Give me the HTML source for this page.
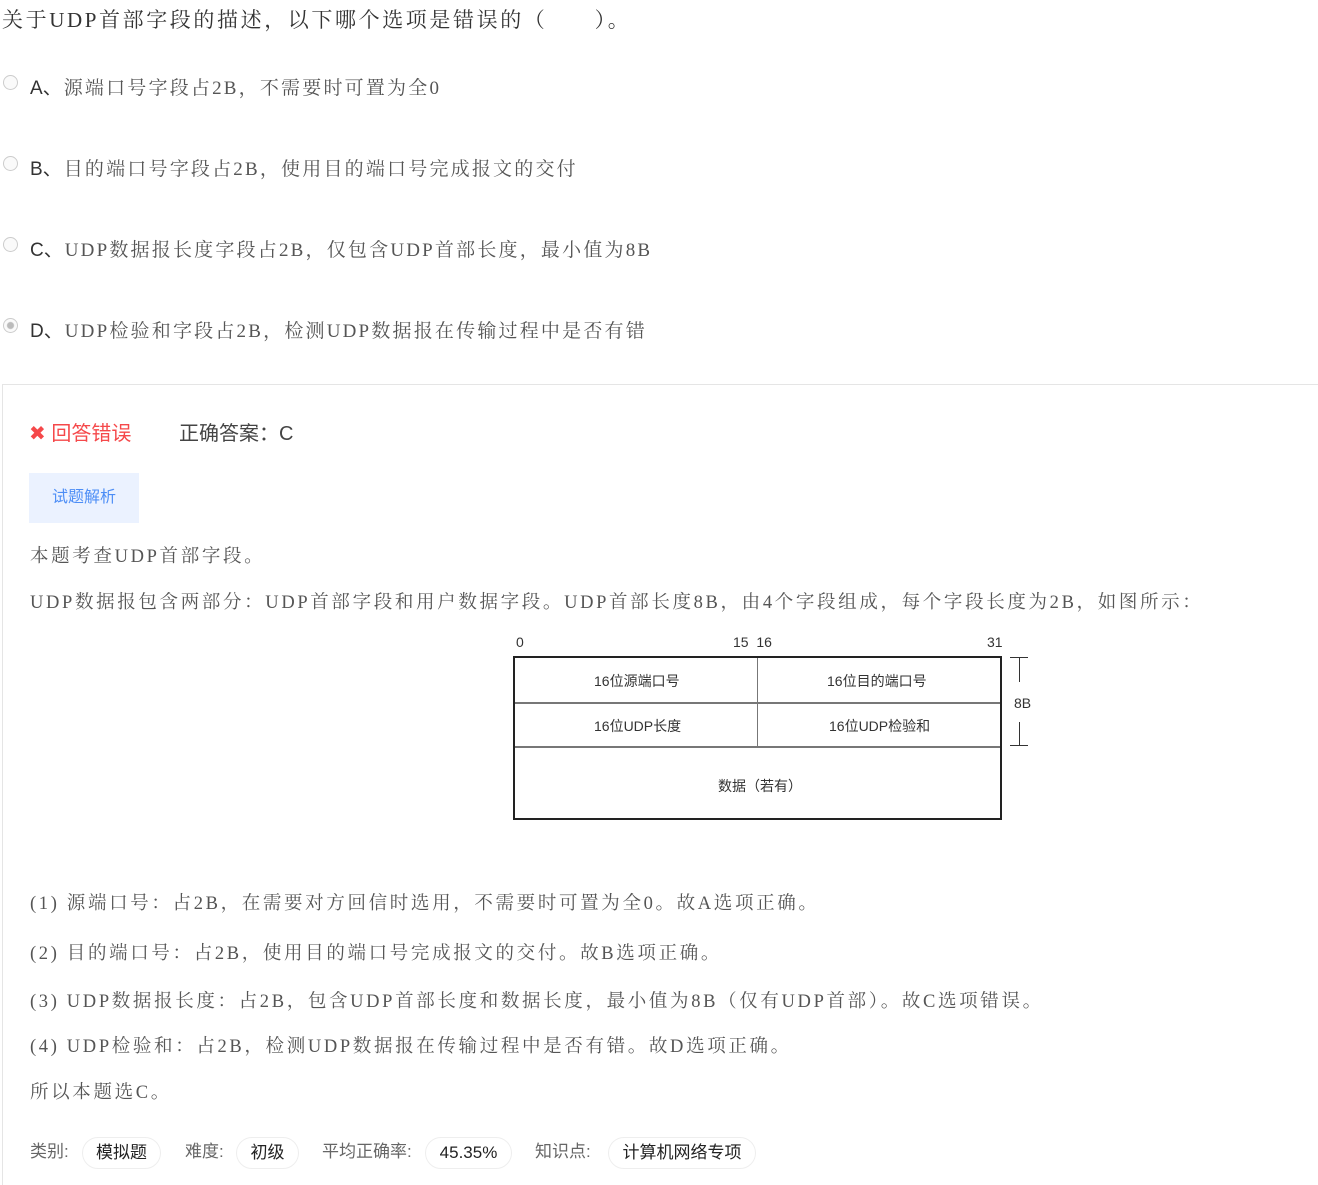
<!DOCTYPE html>
<html><head><meta charset="utf-8"><style>
body{margin:0;width:1318px;height:1174px;position:relative;background:#fff;overflow:hidden;font-family:"Liberation Serif","Noto Serif CJK SC",serif;color:#444}
.a{position:absolute;white-space:nowrap}
.sans{font-family:"Liberation Sans","Noto Sans CJK SC",sans-serif}
.radio{position:absolute;left:3px;width:13px;height:13px;border:1px solid #ccc;border-radius:50%;background:#fafafa}
.opt{font-size:19px;color:#555;letter-spacing:2.2px}
.opt b{font-family:"Liberation Sans","Noto Sans CJK SC",sans-serif;font-weight:normal;color:#333;letter-spacing:0;margin-right:2px}
.p{font-size:18.5px;color:#555;letter-spacing:2.65px}
.pill{position:absolute;top:1137px;height:30px;line-height:30px;border:1px solid #eee;border-radius:16px;text-align:center;color:#222;font-size:17px;font-family:"Liberation Sans","Noto Sans CJK SC",sans-serif}
.lab{position:absolute;top:1137px;line-height:30px;color:#666;font-size:17px;font-family:"Liberation Sans","Noto Sans CJK SC",sans-serif}
.d{position:absolute;font-family:"Liberation Sans","Noto Sans CJK SC",sans-serif;font-size:14px;color:#333;white-space:nowrap}
</style></head><body>
<div class="a" style="left:2px;top:4px;font-size:21px;color:#333;letter-spacing:2.6px">关于UDP首部字段的描述，以下哪个选项是错误的（　　）。</div>

<div class="radio" style="top:75px"></div>
<div class="a opt" style="left:30px;top:73px"><b>A、</b>源端口号字段占2B，不需要时可置为全0</div>
<div class="radio" style="top:156px"></div>
<div class="a opt" style="left:30px;top:154px"><b>B、</b>目的端口号字段占2B，使用目的端口号完成报文的交付</div>
<div class="radio" style="top:237px"></div>
<div class="a opt" style="left:30px;top:235px"><b>C、</b>UDP数据报长度字段占2B，仅包含UDP首部长度，最小值为8B</div>
<div class="radio" style="top:318px;background:radial-gradient(circle,#bbb 0 3px,#fafafa 4px)"></div>
<div class="a opt" style="left:30px;top:316px"><b>D、</b>UDP检验和字段占2B，检测UDP数据报在传输过程中是否有错</div>

<div class="a" style="left:2px;top:384px;width:1316px;height:800px;border-left:1px solid #e5e5e5;border-top:1px solid #e5e5e5"></div>

<div class="a sans" style="left:29px;top:417px;font-size:20px;color:#f5484a">✖ 回答错误</div>
<div class="a sans" style="left:179px;top:417px;font-size:20px;color:#444">正确答案：C</div>
<div class="a sans" style="left:29px;top:473px;width:110px;height:50px;background:#ebf2ff;color:#4d8ef6;font-size:16px;line-height:50px;text-align:center">试题解析</div>

<div class="a p" style="left:30px;top:542px">本题考查UDP首部字段。</div>
<div class="a p" style="left:30px;top:588px">UDP数据报包含两部分：UDP首部字段和用户数据字段。UDP首部长度8B，由4个字段组成，每个字段长度为2B，如图所示：</div>

<div class="d" style="left:516px;top:634px">0</div>
<div class="d" style="left:733px;top:634px">15&nbsp;&nbsp;16</div>
<div class="d" style="left:987px;top:634px">31</div>
<div class="a" style="left:513px;top:656px;width:485px;height:160px;border:2px solid #222"></div>
<div class="a" style="left:515px;top:702px;width:485px;height:2px;background:#777"></div>
<div class="a" style="left:515px;top:746px;width:485px;height:2px;background:#777"></div>
<div class="a" style="left:757px;top:658px;width:1px;height:88px;background:#777"></div>
<div class="d" style="left:594px;top:671px">16位源端口号</div>
<div class="d" style="left:827px;top:671px">16位目的端口号</div>
<div class="d" style="left:594px;top:716px">16位UDP长度</div>
<div class="d" style="left:829px;top:716px">16位UDP检验和</div>
<div class="d" style="left:718px;top:776px">数据（若有）</div>
<div class="a" style="left:1010px;top:657px;width:18px;height:1px;background:#333"></div>
<div class="a" style="left:1019px;top:658px;width:1px;height:24px;background:#333"></div>
<div class="a" style="left:1019px;top:722px;width:1px;height:24px;background:#333"></div>
<div class="a" style="left:1010px;top:745px;width:18px;height:1px;background:#333"></div>
<div class="d" style="left:1014px;top:695px">8B</div>

<div class="a p" style="left:30px;top:889px">(1) 源端口号：占2B，在需要对方回信时选用，不需要时可置为全0。故A选项正确。</div>
<div class="a p" style="left:30px;top:939px">(2) 目的端口号：占2B，使用目的端口号完成报文的交付。故B选项正确。</div>
<div class="a p" style="left:30px;top:987px">(3) UDP数据报长度：占2B，包含UDP首部长度和数据长度，最小值为8B（仅有UDP首部）。故C选项错误。</div>
<div class="a p" style="left:30px;top:1032px">(4) UDP检验和：占2B，检测UDP数据报在传输过程中是否有错。故D选项正确。</div>
<div class="a p" style="left:30px;top:1078px">所以本题选C。</div>

<div class="lab" style="left:30px">类别:</div><div class="pill" style="left:82px;width:77px">模拟题</div>
<div class="lab" style="left:185px">难度:</div><div class="pill" style="left:236px;width:61px">初级</div>
<div class="lab" style="left:322px">平均正确率:</div><div class="pill" style="left:425px;width:85px">45.35%</div>
<div class="lab" style="left:535px">知识点:</div><div class="pill" style="left:608px;width:146px">计算机网络专项</div>
</body></html>
